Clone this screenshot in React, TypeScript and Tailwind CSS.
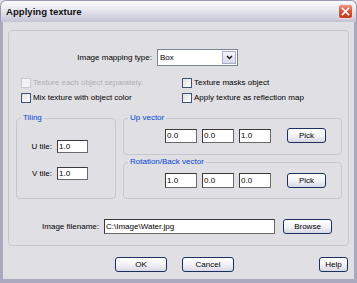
import React from "react";

const Input = ({ w, h, value }: { w: string; h: string; value: string }) => (
  <div
    className={`${w} ${h} bg-white border border-t-[#3a3a3a] border-l-[#3a3a3a] border-r-[#6a6a6a] border-b-[#6a6a6a] flex items-center pl-[1px] text-[8px] leading-none`}
  >
    {value}
  </div>
);

const Btn = ({ w, label }: { w: string; label: string }) => (
  <div
    className={`${w} h-[15px] rounded-[3px] border border-[#1d2f5c] bg-[linear-gradient(to_bottom,#ffffff,#f2f2f6_50%,#d9d9e6)] flex items-center justify-center text-[8px] leading-none`}
  >
    {label}
  </div>
);

const Check = ({ label, disabled }: { label: string; disabled?: boolean }) => (
  <div className="flex items-center h-[10px]">
    <div
      className={`w-[10px] h-[10px] border ${
        disabled ? "border-[#c9c9cf] bg-[#f2f2f2]" : "border-[#3f5470] bg-[linear-gradient(135deg,#e0e0e4,#ffffff)]"
      }`}
    />
    <span className={`ml-[2px] ${disabled ? "text-[#b0aeb5]" : "text-black"}`}>{label}</span>
  </div>
);

export default function App() {
  return (
    <div className="w-[357px] h-[283px] flex flex-col font-['Liberation_Sans',Arial,sans-serif] text-[8px] leading-none text-black bg-[#e0dfe3]">
      {/* Title bar */}
      <div className="h-[22px] shrink-0 rounded-t-[6px] border border-b-0 border-[#9a9ab2] bg-[linear-gradient(to_bottom,#fbfbfd,#e6e6ef_45%,#c3c3d5)] flex items-center pl-[5px] pr-[3px]">
        <span className="font-bold text-[9.6px] text-[#101010]">Applying texture</span>
        <div className="ml-auto w-[15px] h-[15px] rounded-[3px] border border-[#f4e0dc] bg-[linear-gradient(to_bottom,#ec9a86,#d9553b_45%,#c23b22)] flex items-center justify-center">
          <svg width="9" height="9" viewBox="0 0 9 9">
            <path d="M1.5 1.5 L7.5 7.5 M7.5 1.5 L1.5 7.5" stroke="#ffffff" strokeWidth="1.7" strokeLinecap="square" />
          </svg>
        </div>
      </div>

      {/* Body */}
      <div className="flex-1 flex flex-col border-x-[3px] border-b-[4px] border-[#a9a9c0] px-[5px] pt-[8px]">
        {/* Outer group */}
        <div className="h-[216px] rounded-[4px] border border-[#c7c7d0] flex flex-col">
          {/* Mapping type */}
          <div className="mt-[18px] h-[17px] flex items-center">
            <div className="w-[143px] text-right">Image mapping type:</div>
            <div className="ml-[5px] w-[81px] h-[17px] bg-white border border-[#7d8595] flex items-center">
              <span className="pl-[2px]">Box</span>
              <div className="ml-auto mr-[1px] w-[14px] h-[13px] border border-[#a8b0c8] bg-[linear-gradient(to_bottom,#f4f4fa,#d6d8e8)] flex items-center justify-center">
                <svg width="7" height="5" viewBox="0 0 7 5">
                  <path d="M1 1 L3.5 3.5 L6 1" stroke="#1a1a1a" strokeWidth="1.4" fill="none" />
                </svg>
              </div>
            </div>
          </div>

          {/* Checkboxes */}
          <div className="mt-[12px] flex flex-col gap-[5px] pl-[12px]">
            <div className="flex">
              <div className="w-[161px]">
                <Check label="Texture each object separately." disabled />
              </div>
              <Check label="Texture masks object" />
            </div>
            <div className="flex">
              <div className="w-[161px]">
                <Check label="Mix texture with object color" />
              </div>
              <Check label="Apply texture as reflection map" />
            </div>
          </div>

          {/* Groups */}
          <div className="mt-[10px] flex">
            <fieldset className="ml-[7px] w-[100px] h-[86px] rounded-[4px] border border-[#c7c7d0] px-0">
              <legend className="ml-[4px] px-[2px] text-[#0046d5] leading-[10px]">Tiling</legend>
              <div className="mt-[17px] flex items-center">
                <div className="w-[35px] text-right">U tile:</div>
                <div className="ml-[5px]">
                  <Input w="w-[31px]" h="h-[13px]" value="1.0" />
                </div>
              </div>
              <div className="mt-[14px] flex items-center">
                <div className="w-[35px] text-right">V tile:</div>
                <div className="ml-[5px]">
                  <Input w="w-[31px]" h="h-[13px]" value="1.0" />
                </div>
              </div>
            </fieldset>

            <div className="ml-[7px] w-[219px] flex flex-col">
              <fieldset className="h-[42px] rounded-[4px] border border-[#c7c7d0]">
                <legend className="ml-[4px] px-[2px] text-[#0046d5] leading-[10px]">Up vector</legend>
                <div className="mt-[5px] pl-[41px] flex items-center">
                  <Input w="w-[32px]" h="h-[14px]" value="0.0" />
                  <div className="ml-[5px]">
                    <Input w="w-[32px]" h="h-[14px]" value="0.0" />
                  </div>
                  <div className="ml-[5px]">
                    <Input w="w-[32px]" h="h-[14px]" value="1.0" />
                  </div>
                  <div className="ml-[16px]">
                    <Btn w="w-[39px]" label="Pick" />
                  </div>
                </div>
              </fieldset>
              <fieldset className="mt-[2px] h-[42px] rounded-[4px] border border-[#c7c7d0]">
                <legend className="ml-[4px] px-[2px] text-[#0046d5] leading-[10px]">Rotation/Back vector</legend>
                <div className="mt-[6px] pl-[41px] flex items-center">
                  <Input w="w-[32px]" h="h-[15px]" value="1.0" />
                  <div className="ml-[5px]">
                    <Input w="w-[32px]" h="h-[15px]" value="0.0" />
                  </div>
                  <div className="ml-[5px]">
                    <Input w="w-[32px]" h="h-[15px]" value="0.0" />
                  </div>
                  <div className="ml-[16px]">
                    <Btn w="w-[39px]" label="Pick" />
                  </div>
                </div>
              </fieldset>
            </div>
          </div>

          {/* Image filename */}
          <div className="mt-[20px] flex items-center">
            <div className="w-[90px] text-right">Image filename:</div>
            <div className="ml-[5px]">
              <Input w="w-[171px]" h="h-[15px]" value="C:\Image\Water.jpg" />
            </div>
            <div className="ml-[8px]">
              <Btn w="w-[49px]" label="Browse" />
            </div>
          </div>
        </div>

        {/* Bottom buttons */}
        <div className="mt-[11px] flex items-center pl-[107px]">
          <Btn w="w-[52px]" label="OK" />
          <div className="ml-[15px]">
            <Btn w="w-[52px]" label="Cancel" />
          </div>
          <div className="ml-[85px]">
            <Btn w="w-[29px]" label="Help" />
          </div>
        </div>
      </div>
    </div>
  );
}
